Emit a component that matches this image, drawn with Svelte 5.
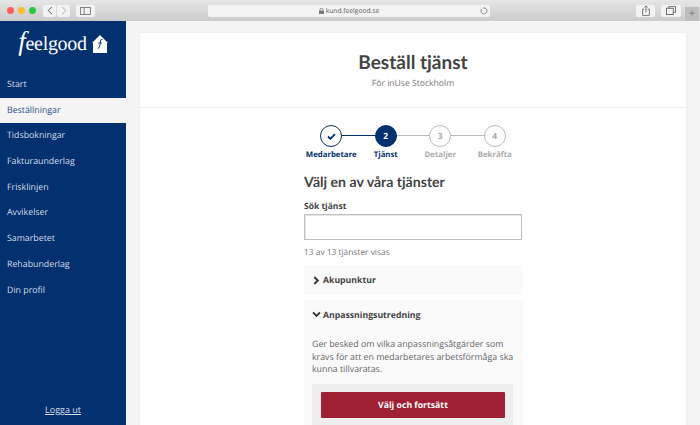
<script>
  const navItems = ['Start', 'Beställningar', 'Tidsbokningar', 'Fakturaunderlag', 'Frisklinjen', 'Avvikelser', 'Samarbetet', 'Rehabunderlag', 'Din profil'];
  const steps = [
    { n: '2', label: 'Tjänst', state: 'current' },
    { n: '3', label: 'Detaljer', state: 'todo' },
    { n: '4', label: 'Bekräfta', state: 'todo' }
  ];
</script>

<div class="window">
  <header class="toolbar">
    <div class="lights">
      <span class="light red"></span>
      <span class="light yellow"></span>
      <span class="light green"></span>
    </div>
    <div class="btn-pair">
      <button class="tb-btn small" aria-label="Bakåt">
        <svg width="6" height="9" viewBox="0 0 6 10"><path d="M5 1 1 5l4 4" fill="none" stroke="#555" stroke-width="1.1"/></svg>
      </button>
      <button class="tb-btn small" aria-label="Framåt">
        <svg width="6" height="9" viewBox="0 0 6 10"><path d="m1 1 4 4-4 4" fill="none" stroke="#aaa" stroke-width="1.1"/></svg>
      </button>
    </div>
    <button class="tb-btn side" aria-label="Sidofält">
      <svg width="11" height="8" viewBox="0 0 12 9"><rect x=".5" y=".5" width="11" height="8" fill="none" stroke="#777"/><path d="M4.5 0v9" stroke="#777"/></svg>
    </button>
    <div class="address">
      <span class="url">
        <svg width="5" height="6" viewBox="0 0 6 7"><rect y="3" width="6" height="4" fill="#777"/><path d="M1.2 3V2a1.8 1.8 0 0 1 3.6 0v1" fill="none" stroke="#777"/></svg>
        kund.feelgood.se
      </span>
      <svg class="reload" width="8" height="8" viewBox="0 0 9 9"><path d="M5.600 1.200A3.400 3.400 0 1 1 2 2" fill="none" stroke="#777" stroke-width=".9"/><path d="M4.200 0v2.400L6 1.200z" fill="#777"/></svg>
    </div>
    <button class="tb-btn share" aria-label="Dela">
      <svg width="8" height="11" viewBox="0 0 9 12"><path d="M2.600 4.500H.7v7h7.600v-7H6.400M4.500 8V.8M2.800 2.400 4.500.8l1.700 1.600" fill="none" stroke="#666"/></svg>
    </button>
    <button class="tb-btn tabs" aria-label="Flikar">
      <svg width="10" height="9" viewBox="0 0 11 10"><path d="M3 2.500V.5h7.500v6.500H8" fill="none" stroke="#666"/><rect x=".5" y="2.500" width="7.500" height="7" fill="none" stroke="#666"/></svg>
    </button>
    <div class="new-tab">+</div>
  </header>

  <div class="page">
    <aside class="sidebar">
      <div class="logo">
        <span class="wordmark"><i class="swash">f</i>eelgood</span>
        <svg width="16" height="18" viewBox="0 0 16 18">
          <path d="M8 0 16 8h-1v10H1V8H0z" fill="#fff"/>
          <path d="M10.500 4.500C8.800 4 8.600 5.500 8.300 7.500 8 10 7.800 13 5.800 13.500M6.300 8h3.500" fill="none" stroke="#03306e" stroke-width="1"/>
        </svg>
      </div>
      <nav class="nav">
        {#each navItems as item}
          <a href="#top" class="nav-item" class:active={item === 'Beställningar'}>{item}</a>
        {/each}
      </nav>
      <a href="#top" class="logout">Logga ut</a>
    </aside>

    <main class="main">
      <section class="card">
        <div class="card-head">
          <h1>Beställ tjänst</h1>
          <p>För inUse Stockholm</p>
        </div>

        <div class="card-body">
          <ol class="stepper">
            <li class="step done">
              <span class="dot">
                <svg width="9" height="7" viewBox="0 0 9 7"><path d="M1 3.500 3.400 5.800 8 1.200" fill="none" stroke="#03306e" stroke-width="1.800"/></svg>
              </span>
              <span class="step-label">Medarbetare</span>
            </li>
            {#each steps as step}
              <li class="step {step.state}">
                <span class="dot">{step.n}</span>
                <span class="step-label">{step.label}</span>
              </li>
            {/each}
          </ol>

          <div class="form">
            <h2>Välj en av våra tjänster</h2>
            <label class="field-label" for="search">Sök tjänst</label>
            <input id="search" class="search" type="text" />
            <p class="count">13 av 13 tjänster visas</p>

            <div class="panel closed">
              <svg width="7" height="9" viewBox="0 0 7 9"><path d="m1.300 1 3.500 3.500-3.500 3.500" fill="none" stroke="#333" stroke-width="1.900"/></svg>
              <span>Akupunktur</span>
            </div>

            <div class="panel open">
              <div class="panel-title">
                <svg width="9" height="7" viewBox="0 0 9 7"><path d="m1 1.300 3.500 3.500L8 1.300" fill="none" stroke="#333" stroke-width="1.900"/></svg>
                <span>Anpassningsutredning</span>
              </div>
              <p class="desc">Ger besked om vilka anpassningsåtgärder som krävs för att en medarbetares arbetsförmåga ska kunna tillvaratas.</p>
              <div class="cta-wrap">
                <button class="cta">Välj och fortsätt</button>
              </div>
            </div>
          </div>
        </div>
      </section>
    </main>
  </div>
</div>

<style>
  :global(body) {
    margin: 0;
    background: #f4f4f4;
  }

  .window {
    width: 700px;
    height: 425px;
    display: flex;
    flex-direction: column;
    overflow: hidden;
    font-family: "Open Sans", sans-serif;
    text-rendering: geometricPrecision;
    color: #444;
  }

  /* browser chrome */
  .toolbar {
    height: 21px;
    flex: none;
    display: flex;
    align-items: center;
    box-sizing: border-box;
    padding: 0 0 0 7px;
    background: linear-gradient(#e6e6e6, #cbcbcb);
  }
  .lights {
    display: flex;
    gap: 4px;
    margin-right: 7px;
  }
  .light {
    width: 7px;
    height: 7px;
    border-radius: 50%;
  }
  .red { background: #fb5f57; }
  .yellow { background: #fcbc2e; }
  .green { background: #28c840; }
  .btn-pair {
    display: flex;
    gap: 1px;
    margin-right: 6px;
  }
  .tb-btn {
    padding: 0;
    border: 0;
    height: 12px;
    border-radius: 2px;
    background: #f3f3f3;
    display: flex;
    align-items: center;
    justify-content: center;
  }
  .small { width: 13px; }
  .side { width: 19px; }
  .address {
    width: 282px;
    height: 12px;
    margin-left: 113px;
    position: relative;
    display: flex;
    align-items: center;
    justify-content: center;
    background: #f3f3f3;
    border-radius: 2px;
  }
  .url {
    font-size: 6.700px;
    color: #555;
    display: flex;
    align-items: center;
    gap: 2px;
  }
  .reload {
    position: absolute;
    right: 2px;
    top: 2px;
  }
  .share {
    width: 19px;
    margin-left: 146px;
  }
  .tabs {
    width: 20px;
    margin-left: 6px;
  }
  .new-tab {
    width: 14px;
    height: 14px;
    margin-left: 4px;
    align-self: flex-end;
    background: #bdbdbd;
    color: #777;
    font-size: 11px;
    line-height: 14px;
    text-align: center;
  }

  .page {
    flex: 1;
    display: flex;
    min-height: 0;
  }

  /* sidebar */
  .sidebar {
    width: 126px;
    flex: none;
    display: flex;
    flex-direction: column;
    background: #03306e;
    color: #fff;
  }
  .logo {
    height: 50px;
    display: flex;
    align-items: center;
    justify-content: center;
    gap: 5px;
    padding: 0 0 4px;
    box-sizing: border-box;
  }
  .wordmark {
    font-family: "Liberation Serif", serif;
    font-size: 20px;
    letter-spacing: -0.3px;
    line-height: 1;
  }
  .swash {
    font-size: 27px;
    line-height: 0;
  }
  .nav {
    display: flex;
    flex-direction: column;
    margin-top: 1px;
  }
  .nav-item {
    height: 25.700px;
    line-height: 25.700px;
    padding-left: 7px;
    font-size: 8.800px;
    color: #d5dce8;
    text-decoration: none;
  }
  .nav-item.active {
    background: #f4f4f4;
    color: #2a4f8a;
  }
  .logout {
    margin-top: auto;
    margin-bottom: 9px;
    text-align: center;
    font-size: 9px;
    color: #d5dce8;
  }

  /* main card */
  .main {
    flex: 1;
    min-width: 0;
    padding: 12px 14px 0;
  }
  .card {
    background: #fff;
    height: 400px;
    box-shadow: 0 0 2px rgba(0, 0, 0, 0.06);
  }
  .card-head {
    height: 75px;
    box-sizing: border-box;
    padding-top: 18px;
    text-align: center;
    border-bottom: 1px solid #eee;
  }
  h1 {
    margin: 0;
    font-family: Lato, sans-serif;
    font-size: 19px;
    line-height: 23px;
    font-weight: 700;
    color: #444;
  }
  .card-head p {
    margin: 3px 0 0;
    font-size: 8.600px;
    line-height: 13px;
    color: #777;
  }
  .card-body {
    width: 219px;
    margin-left: 164px;
  }

  /* stepper */
  .stepper {
    list-style: none;
    margin: 17px 0 0;
    padding: 0;
    display: flex;
    justify-content: center;
    width: 218px;
  }
  .step {
    width: 54.500px;
    position: relative;
    display: flex;
    flex-direction: column;
    align-items: center;
  }
  .step + .step::before {
    content: '';
    position: absolute;
    top: 10px;
    right: 50%;
    width: 100%;
    height: 1px;
    background: #bbb;
  }
  .step.current::before {
    background: #03306e;
  }
  .dot {
    position: relative;
    z-index: 1;
    width: 22px;
    height: 22px;
    box-sizing: border-box;
    border-radius: 50%;
    border: 1px solid #bbb;
    background: #fff;
    color: #aaa;
    font-size: 8.500px;
    font-weight: 700;
    display: flex;
    align-items: center;
    justify-content: center;
  }
  .done .dot {
    border: 1.500px solid #03306e;
  }
  .current .dot {
    background: #03306e;
    border-color: #03306e;
    color: #fff;
  }
  .step-label {
    margin-top: 2px;
    font-size: 7.800px;
    line-height: 12px;
    font-weight: 700;
    color: #aaa;
    white-space: nowrap;
  }
  .done .step-label,
  .current .step-label {
    color: #03306e;
  }

  /* form */
  .form { margin-top: 13px; }
  h2 {
    margin: 0;
    font-family: Lato, sans-serif;
    font-size: 14.100px;
    line-height: 18px;
    font-weight: 700;
    color: #444;
  }
  .field-label {
    display: block;
    margin-top: 8px;
    font-size: 8.500px;
    line-height: 13px;
    font-weight: 700;
    color: #444;
  }
  .search {
    display: block;
    width: 218px;
    height: 26px;
    margin: 1px 0 0;
    box-sizing: border-box;
    border: 1px solid #c0c0c0;
    box-shadow: inset 1px 1px 1px rgba(0, 0, 0, 0.12);
    outline: none;
    background: #fff;
  }
  .count {
    margin: 6px 0 0;
    font-size: 8.400px;
    line-height: 13px;
    color: #777;
  }
  .panel {
    background: #fafafa;
    font-size: 8.700px;
    font-weight: 700;
    color: #444;
  }
  .closed {
    margin-top: 6px;
    height: 30px;
    display: flex;
    align-items: center;
    gap: 3px;
    padding-left: 9px;
  }
  .open {
    margin-top: 5px;
    padding: 0 8px;
    height: 130px;
  }
  .panel-title {
    height: 29px;
    display: flex;
    align-items: center;
    gap: 2px;
  }
  .desc {
    margin: 9px 0 0;
    font-size: 8.800px;
    line-height: 12.700px;
    font-weight: 400;
    color: #666;
  }
  .cta-wrap {
    margin: 8px 2px 0 0;
    padding: 8px 8px 0 9px;
    height: 50px;
    background: #eee;
  }
  .cta {
    display: block;
    width: 100%;
    height: 26px;
    border: 0;
    border-radius: 1px;
    background: #9e2032;
    color: #fff;
    font-family: "Open Sans", sans-serif;
    font-size: 8.700px;
    font-weight: 700;
    text-rendering: geometricPrecision;
  }
</style>
